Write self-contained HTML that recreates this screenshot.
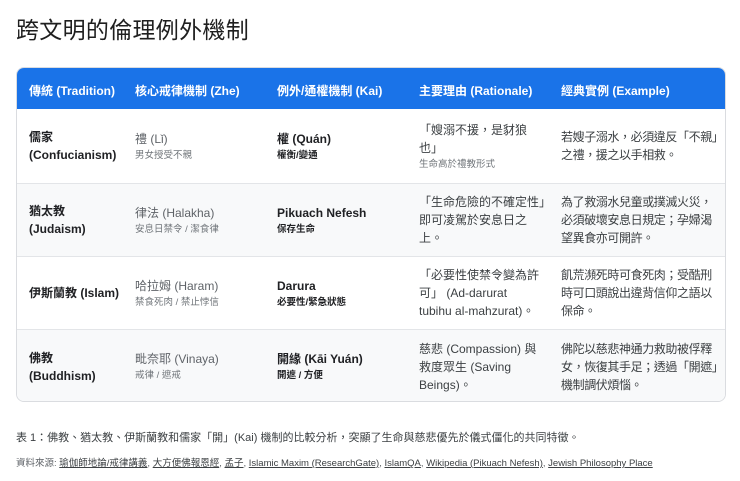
<!DOCTYPE html>
<html><head><meta charset="utf-8"><style>
*{margin:0;padding:0;box-sizing:border-box}
body{width:740px;height:481px;background:#fff;font-family:"Liberation Sans","Noto Sans CJK TC",sans-serif;color:#202124;overflow:hidden;position:relative}
h1{position:absolute;left:16px;top:11px;font-size:23px;font-weight:normal;letter-spacing:0.3px;color:#1f1f1f}
.tbl{position:absolute;left:16px;top:67px;width:710px;height:335px;border:1px solid #dadce0;border-radius:8px;overflow:hidden}
.hd{position:absolute;left:0;top:0;width:100%;height:41px;background:#1a73e8;color:#fff;font-weight:bold;font-size:12px}
.hd div{position:absolute;top:14px}
.row{position:absolute;left:0;width:100%;border-top:1px solid #e3e5e8;font-size:12px}
.row.alt{background:#f8f9fa}
.c{position:absolute;top:0;height:100%;display:flex;flex-direction:column;justify-content:center;line-height:18px;white-space:nowrap}
.c1{left:12px;width:100px;font-weight:bold}
.c2{left:118px;width:136px;color:#5f6368}
.c3{left:260px;width:136px;font-weight:bold}
.c4{left:402px;width:140px;color:#3c4043}
.c5{left:544px;width:170px;color:#3c4043;letter-spacing:-0.4px}
.s{font-size:9.5px;line-height:15px;color:#70757a;font-weight:normal}
.c3 .s{color:#202124;font-weight:bold}
.cap{position:absolute;left:16px;top:429px;font-size:11px;color:#3c4043}
.src{position:absolute;left:16px;top:455px;font-size:9.5px;color:#5f6368}
.src u{color:#3c4043}
</style></head><body>
<h1>跨文明的倫理例外機制</h1>
<div class="tbl">
<div class="hd">
<div style="left:12px">傳統 (Tradition)</div>
<div style="left:118px">核心戒律機制 (Zhe)</div>
<div style="left:260px">例外/通權機制 (Kai)</div>
<div style="left:402px">主要理由 (Rationale)</div>
<div style="left:544px">經典實例 (Example)</div>
</div>
<div class="row" style="top:41px;height:74px;border-top:none">
<div class="c c1">儒家<br>(Confucianism)</div>
<div class="c c2"><div>禮 (Lǐ)</div><div class="s">男女授受不親</div></div>
<div class="c c3"><div>權 (Quán)</div><div class="s">權衡/變通</div></div>
<div class="c c4"><div>「嫂溺不援，是豺狼<br>也」</div><div class="s">生命高於禮教形式</div></div>
<div class="c c5">若嫂子溺水，必須違反「不親」<br>之禮，援之以手相救。</div>
</div>
<div class="row alt" style="top:115px;height:73px">
<div class="c c1">猶太教<br>(Judaism)</div>
<div class="c c2"><div>律法 (Halakha)</div><div class="s">安息日禁令 / 潔食律</div></div>
<div class="c c3"><div>Pikuach Nefesh</div><div class="s">保存生命</div></div>
<div class="c c4">「生命危險的不確定性」<br>即可凌駕於安息日之<br>上。</div>
<div class="c c5">為了救溺水兒童或撲滅火災，<br>必須破壞安息日規定；孕婦渴<br>望異食亦可開許。</div>
</div>
<div class="row" style="top:188px;height:73px">
<div class="c c1">伊斯蘭教 (Islam)</div>
<div class="c c2"><div>哈拉姆 (Haram)</div><div class="s">禁食死肉 / 禁止悖信</div></div>
<div class="c c3"><div>Darura</div><div class="s">必要性/緊急狀態</div></div>
<div class="c c4">「必要性使禁令變為許<br>可」 (Ad-darurat<br>tubihu al-mahzurat)。</div>
<div class="c c5">飢荒瀕死時可食死肉；受酷刑<br>時可口頭說出違背信仰之語以<br>保命。</div>
</div>
<div class="row alt" style="top:261px;height:74px">
<div class="c c1">佛教<br>(Buddhism)</div>
<div class="c c2"><div>毗奈耶 (Vinaya)</div><div class="s">戒律 / 遮戒</div></div>
<div class="c c3"><div>開緣 (Kāi Yuán)</div><div class="s">開遮 / 方便</div></div>
<div class="c c4">慈悲 (Compassion) 與<br>救度眾生 (Saving<br>Beings)。</div>
<div class="c c5">佛陀以慈悲神通力救助被俘釋<br>女，恢復其手足；透過「開遮」<br>機制調伏煩惱。</div>
</div>
</div>
<div class="cap">表 1：佛教、猶太教、伊斯蘭教和儒家「開」(Kai) 機制的比較分析，突顯了生命與慈悲優先於儀式僵化的共同特徵。</div>
<div class="src">資料來源: <u>瑜伽師地論/戒律講義</u>, <u>大方便佛報恩經</u>, <u>孟子</u>, <u>Islamic Maxim (ResearchGate)</u>, <u>IslamQA</u>, <u>Wikipedia (Pikuach Nefesh)</u>, <u>Jewish Philosophy Place</u></div>
</body></html>
